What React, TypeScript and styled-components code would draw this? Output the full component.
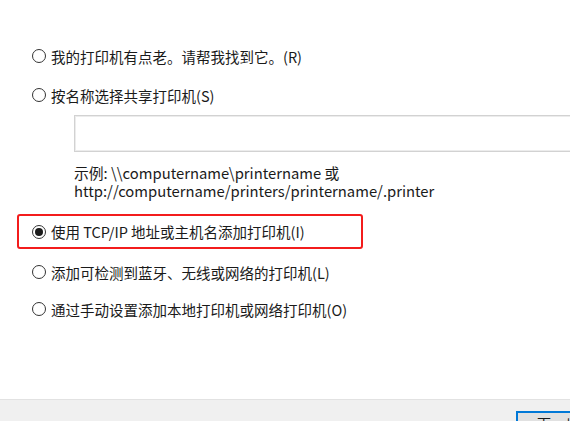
import React from "react";
import styled, { createGlobalStyle } from "styled-components";

const Global = createGlobalStyle`
  html, body { margin: 0; padding: 0; background: #ffffff; }
  body {
    width: 570px; height: 421px; overflow: hidden;
    font-family: "Noto Sans CJK SC", "Noto Sans", sans-serif;
    color: #1a1a1a;
  }
`;

const Page = styled.div`
  width: 570px;
  height: 421px;
  display: flex;
  flex-direction: column;
  overflow: hidden;
`;

const Main = styled.div`
  flex: 1;
  display: flex;
  flex-direction: column;
  padding-top: 46px;
  background: #ffffff;
`;

const Option = styled.label<{ $mt?: number; $ml?: number }>`
  display: flex;
  align-items: center;
  gap: 5px;
  height: 20px;
  margin-left: ${(p) => p.$ml ?? 32}px;
  margin-top: ${(p) => p.$mt ?? 0}px;
  font-size: 14.5px;
  white-space: nowrap;
`;

const Highlight = styled.div`
  box-sizing: border-box;
  margin-left: 17px;
  margin-top: 14px;
  width: 346px;
  height: 35px;
  border: 2px solid #f31c1c;
  border-radius: 3px;
  display: flex;
  align-items: center;
  padding-left: 13px;
`;

const Radio = styled.span<{ $checked?: boolean }>`
  box-sizing: border-box;
  width: 14px;
  height: 14px;
  border-radius: 50%;
  border: 1px solid #333333;
  background: #ffffff;
  display: flex;
  align-items: center;
  justify-content: center;
  flex-shrink: 0;
  &::after {
    content: "";
    display: ${(p) => (p.$checked ? "block" : "none")};
    width: 8px;
    height: 8px;
    border-radius: 50%;
    background: #1a1a1a;
  }
`;

const TextBox = styled.div`
  box-sizing: border-box;
  margin-left: 74px;
  margin-top: 10px;
  width: 530px;
  height: 37px;
  border: 1px solid #d2d2d2;
  box-shadow: inset 0 0 0 1px #ececec;
  background: #ffffff;
  flex-shrink: 0;
`;

const Example = styled.div`
  margin-left: 74px;
  margin-top: 12px;
  font-size: 14.8px;
  line-height: 18px;
  white-space: nowrap;
`;

const Footer = styled.div`
  height: 22px;
  background: #f0f0f0;
  border-top: 1px solid #e2e2e2;
  display: flex;
  justify-content: flex-start;
  padding-left: 516px;
  padding-top: 11px;
  box-sizing: border-box;
  flex-shrink: 0;
  overflow: hidden;
`;

const Button = styled.div`
  box-sizing: border-box;
  width: 80px;
  height: 24px;
  flex-shrink: 0;
  border: 2px solid #0078d7;
  background: #e1e1e1;
  font-size: 14px;
  line-height: 20px;
  padding-left: 19px;
  white-space: nowrap;
  color: #1a1a1a;
`;

export default function App() {
  return (
    <Page>
      <Global />
      <Main>
        <Option>
          <Radio />
          我的打印机有点老。请帮我找到它。(R)
        </Option>
        <Option $mt={19}>
          <Radio />
          按名称选择共享打印机(S)
        </Option>
        <TextBox />
        <Example>
          示例: \\computername\printername 或
          <br />
          http://computername/printers/printername/.printer
        </Example>
        <Highlight>
          <Option $ml={0}>
            <Radio $checked />
            使用 TCP/IP 地址或主机名添加打印机(I)
          </Option>
        </Highlight>
        <Option $mt={13}>
          <Radio />
          添加可检测到蓝牙、无线或网络的打印机(L)
        </Option>
        <Option $mt={17}>
          <Radio />
          通过手动设置添加本地打印机或网络打印机(O)
        </Option>
      </Main>
      <Footer>
        <Button>下一步(N)</Button>
      </Footer>
    </Page>
  );
}
